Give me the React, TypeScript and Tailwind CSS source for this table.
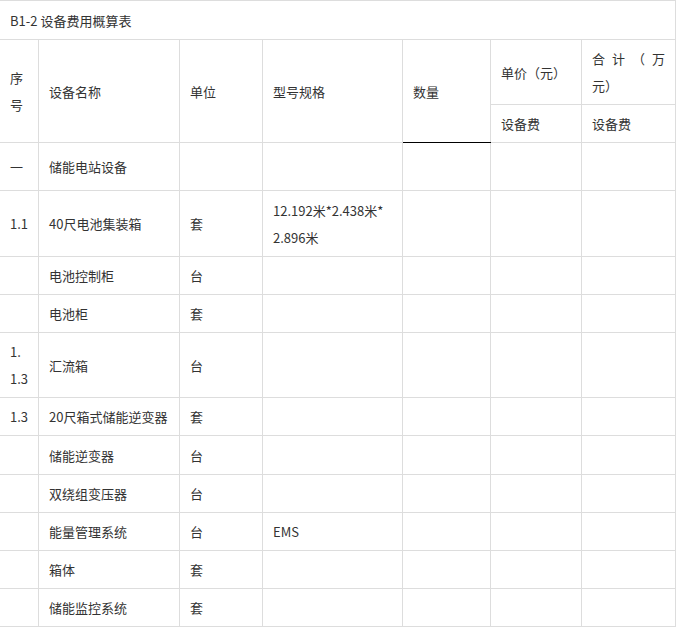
import React from "react";

interface Row {
  no?: React.ReactNode;
  name: string;
  unit?: string;
  spec?: React.ReactNode;
  h: string;
}

const rows: Row[] = [
  { no: "一", name: "储能电站设备", h: "h-[48px]" },
  {
    no: "1.1",
    name: "40尺电池集装箱",
    unit: "套",
    spec: (
      <>
        12.192米*2.438米*
        <br />
        2.896米
      </>
    ),
    h: "h-[66px]",
  },
  { name: "电池控制柜", unit: "台", h: "h-[38px]" },
  { name: "电池柜", unit: "套", h: "h-[38px]" },
  {
    no: (
      <>
        1.
        <br />
        1.3
      </>
    ),
    name: "汇流箱",
    unit: "台",
    h: "h-[65px]",
  },
  { no: "1.3", name: "20尺箱式储能逆变器", unit: "套", h: "h-[38px]" },
  { name: "储能逆变器", unit: "台", h: "h-[39px]" },
  { name: "双绕组变压器", unit: "台", h: "h-[38px]" },
  { name: "能量管理系统", unit: "台", spec: "EMS", h: "h-[38px]" },
  { name: "箱体", unit: "套", h: "h-[38px]" },
  { name: "储能监控系统", unit: "套", h: "h-[38px]" },
];

const td = "border border-[#dddddd] px-[10px] py-[5px] align-middle";

export default function App() {
  return (
    <div className="w-[678px] h-[628px] overflow-hidden bg-white font-['Noto_Sans_CJK_SC','Noto_Sans',sans-serif] text-[13px] leading-[27px] text-[#333333]">
      <table className="-ml-px w-[676px] table-fixed border-collapse">
        <colgroup>
          <col className="w-[39px]" />
          <col className="w-[141px]" />
          <col className="w-[83px]" />
          <col className="w-[140px]" />
          <col className="w-[88px]" />
          <col className="w-[91px]" />
          <col className="w-[94px]" />
        </colgroup>
        <tbody>
          <tr className="h-[39px]">
            <td colSpan={7} className={td}>
              B1-2 设备费用概算表
            </td>
          </tr>
          <tr className="h-[65px]">
            <td rowSpan={2} className={td}>
              序<br />号
            </td>
            <td rowSpan={2} className={td}>
              设备名称
            </td>
            <td rowSpan={2} className={td}>
              单位
            </td>
            <td rowSpan={2} className={td}>
              型号规格
            </td>
            <td rowSpan={2} className={`${td} border-b-black`}>
              数量
            </td>
            <td className={td}>单价（元）</td>
            <td className={td}>
              <div className="text-justify [text-align-last:justify]">合计（万</div>
              <div>元）</div>
            </td>
          </tr>
          <tr className="h-[38px]">
            <td className={td}>设备费</td>
            <td className={td}>设备费</td>
          </tr>
          {rows.map((r, i) => (
            <tr key={i} className={r.h}>
              <td className={td}>{r.no}</td>
              <td className={td}>{r.name}</td>
              <td className={td}>{r.unit}</td>
              <td className={td}>{r.spec}</td>
              <td className={td}></td>
              <td className={td}></td>
              <td className={td}></td>
            </tr>
          ))}
        </tbody>
      </table>
    </div>
  );
}
